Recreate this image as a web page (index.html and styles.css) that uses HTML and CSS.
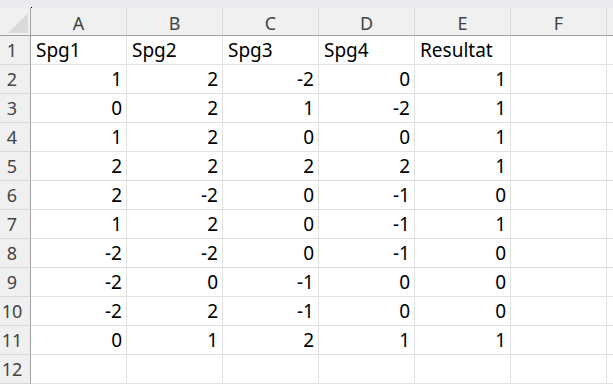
FILE: index.html
```html
<!DOCTYPE html>
<html>
<head>
<meta charset="utf-8">
<link rel="stylesheet" href="styles.css">
</head>
<body>
<div class="topstrip"><span class="dot"></span></div>
<div class="sheet">
  <div class="corner"><span class="tri"></span></div>
  <div class="colhead">A</div><div class="colhead">B</div><div class="colhead">C</div><div class="colhead">D</div><div class="colhead">E</div><div class="colhead">F</div><div class="colhead last"></div>

  <div class="rowhead">1</div><div class="cell">Spg1</div><div class="cell">Spg2</div><div class="cell">Spg3</div><div class="cell">Spg4</div><div class="cell">Resultat</div><div class="cell"></div><div class="cell"></div>
  <div class="rowhead">2</div><div class="cell num">1</div><div class="cell num">2</div><div class="cell num">-2</div><div class="cell num">0</div><div class="cell num">1</div><div class="cell"></div><div class="cell"></div>
  <div class="rowhead">3</div><div class="cell num">0</div><div class="cell num">2</div><div class="cell num">1</div><div class="cell num">-2</div><div class="cell num">1</div><div class="cell"></div><div class="cell"></div>
  <div class="rowhead">4</div><div class="cell num">1</div><div class="cell num">2</div><div class="cell num">0</div><div class="cell num">0</div><div class="cell num">1</div><div class="cell"></div><div class="cell"></div>
  <div class="rowhead">5</div><div class="cell num">2</div><div class="cell num">2</div><div class="cell num">2</div><div class="cell num">2</div><div class="cell num">1</div><div class="cell"></div><div class="cell"></div>
  <div class="rowhead">6</div><div class="cell num">2</div><div class="cell num">-2</div><div class="cell num">0</div><div class="cell num">-1</div><div class="cell num">0</div><div class="cell"></div><div class="cell"></div>
  <div class="rowhead">7</div><div class="cell num">1</div><div class="cell num">2</div><div class="cell num">0</div><div class="cell num">-1</div><div class="cell num">1</div><div class="cell"></div><div class="cell"></div>
  <div class="rowhead">8</div><div class="cell num">-2</div><div class="cell num">-2</div><div class="cell num">0</div><div class="cell num">-1</div><div class="cell num">0</div><div class="cell"></div><div class="cell"></div>
  <div class="rowhead">9</div><div class="cell num">-2</div><div class="cell num">0</div><div class="cell num">-1</div><div class="cell num">0</div><div class="cell num">0</div><div class="cell"></div><div class="cell"></div>
  <div class="rowhead">10</div><div class="cell num">-2</div><div class="cell num">2</div><div class="cell num">-1</div><div class="cell num">0</div><div class="cell num">0</div><div class="cell"></div><div class="cell"></div>
  <div class="rowhead">11</div><div class="cell num">0</div><div class="cell num">1</div><div class="cell num">2</div><div class="cell num">1</div><div class="cell num">1</div><div class="cell"></div><div class="cell"></div>
  <div class="rowhead">12</div><div class="cell"></div><div class="cell"></div><div class="cell"></div><div class="cell"></div><div class="cell"></div><div class="cell"></div><div class="cell"></div>
</div>
</body>
</html>
```

FILE: styles.css
```css
html, body {
  margin: 0;
  padding: 0;
  background: #ffffff;
  overflow: hidden;
}
body {
  font-family: "Noto Sans", "Liberation Sans", sans-serif;
  font-size: 19px;
  color: #000;
}
.topstrip {
  height: 8px;
  background: #ebebee;
  position: relative;
}
.dot {
  position: absolute;
  left: 31px;
  top: 7px;
  width: 1px;
  height: 1px;
  background: #000;
}
.sheet {
  display: grid;
  grid-template-columns: 31px repeat(6, 96px) 1fr;
  grid-template-rows: 28px repeat(12, 29px);
}
.corner {
  background: #f0f0f0;
  border-right: 1px solid #a0a0a0;
  border-bottom: 1px solid #a0a0a0;
  position: relative;
}
.tri {
  position: absolute;
  left: 8px;
  top: 5px;
  width: 20px;
  height: 20px;
  background: #dadada;
  clip-path: polygon(100% 0, 100% 100%, 0 100%);
}
.colhead {
  background: #f0f0f0;
  border-right: 1px solid #d9d9d9;
  border-bottom: 1px solid #a0a0a0;
  color: #444;
  font-size: 18px;
  line-height: 1;
  display: flex;
  align-items: center;
  justify-content: center;
  padding-top: 2px;
}
.colhead.last {
  border-right: none;
}
.rowhead {
  background: #f0f0f0;
  border-right: 1px solid #a0a0a0;
  border-bottom: 1px solid #d9d9d9;
  color: #444;
  font-size: 18px;
  line-height: 1;
  display: flex;
  align-items: center;
  justify-content: center;
  padding-right: 6px;
}
.cell {
  border-right: 1px solid #e1e1e1;
  border-bottom: 1px solid #e1e1e1;
  display: flex;
  align-items: center;
  padding: 1px 4px 0 5px;
  line-height: 1;
  white-space: nowrap;
  overflow: hidden;
}
.cell.num {
  justify-content: flex-end;
}
```
